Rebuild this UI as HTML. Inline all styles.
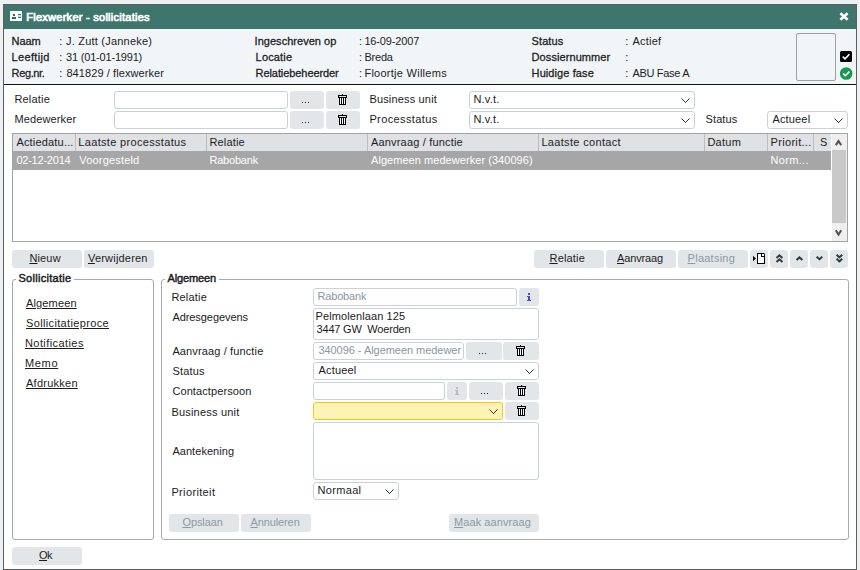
<!DOCTYPE html>
<html><head><meta charset="utf-8">
<style>
*{box-sizing:border-box;margin:0;padding:0}
html,body{width:860px;height:570px;overflow:hidden;background:#eef1f3;font-family:"Liberation Sans",sans-serif;font-size:11px;color:#1c1c1c}
.b{position:absolute}
.t{position:absolute;white-space:nowrap;line-height:13px}
.inp{border:1px solid #c9d1da;border-radius:3px;background:#fff}
.btn{position:absolute;background:#e2e6e9;border-radius:3px}
.fs{border:1px solid #a9a9a9;border-radius:3px}
.u{text-decoration:underline;text-underline-offset:1px}
</style></head><body>

<div class="b " style="left:3px;top:4px;width:854px;height:566px;border:1px solid #5c5c5c;background:#fff"></div>
<div class="b " style="left:4px;top:5px;width:852px;height:24px;background:#3e766e"></div>
<svg class="b" style="left:10px;top:11px" width="12" height="10" viewBox="0 0 12 10" shape-rendering="crispEdges"><rect x="0" y="0" width="12" height="10" fill="#fff"/><rect x="3" y="3" width="2" height="2" fill="#2f6a61"/><rect x="2" y="6" width="4" height="2" fill="#2f6a61"/><rect x="8" y="3" width="3" height="1" fill="#3d766d"/><rect x="8" y="4" width="3" height="2" fill="#c3d5d2"/><rect x="8" y="6" width="3" height="1" fill="#3d766d"/></svg>
<svg class="b" style="left:839px;top:12px" width="10" height="9" viewBox="0 0 10 9"><path d="M1.4 1.3L8.6 7.7M8.6 1.3L1.4 7.7" stroke="#fff" stroke-width="2.6"/></svg>
<div class="b " style="left:4px;top:29px;width:852px;height:55px;background:#f1f5f8"></div>
<div class="b " style="left:4px;top:84px;width:852px;height:1px;background:#111"></div>
<div class="b " style="left:796px;top:33px;width:40px;height:48px;border:1px solid #a0a0a0;border-radius:2px;background:#f1f5f8"></div>
<svg class="b" style="left:840px;top:51px" width="13" height="12" viewBox="0 0 13 12"><rect x="0" y="0" width="12" height="11" rx="1.5" fill="#000"/><path d="M2.8 5.6L5 7.8L9.4 3.2" fill="none" stroke="#fff" stroke-width="1.6"/></svg>
<svg class="b" style="left:840px;top:67px" width="13" height="13" viewBox="0 0 13 13"><circle cx="6.2" cy="6.5" r="6.3" fill="#159a4f"/><path d="M3.2 6.6L5.4 8.7L9.4 4.6" fill="none" stroke="#fff" stroke-width="1.6"/></svg>
<div class="b inp" style="left:114px;top:91px;width:174px;height:18px;"></div>
<div class="btn" style="left:290px;top:91px;width:34px;height:18px"><div class="b" style="left:12px;top:11px;width:1px;height:1px;background:#1a1a2a"></div><div class="b" style="left:15px;top:11px;width:1px;height:1px;background:#1a1a2a"></div><div class="b" style="left:18px;top:11px;width:1px;height:1px;background:#1a1a2a"></div></div>
<div class="btn" style="left:326px;top:91px;width:34px;height:18px"><div style="position:absolute;left:11px;top:2px;line-height:0"><svg width="11" height="13" viewBox="0 0 11 13" shape-rendering="crispEdges"><rect x="4.6" y="1" width="1.8" height="1" fill="#000"/><rect x="1.5" y="2.5" width="8" height="2" fill="none" stroke="#000" stroke-width="1"/><rect x="2" y="5" width="7" height="7" fill="#000"/><rect x="3" y="5" width="1" height="6" fill="#fff"/><rect x="5" y="5" width="1" height="6" fill="#fff"/><rect x="7" y="5" width="1" height="6" fill="#fff"/></svg></div></div>
<div class="b inp" style="left:469px;top:91px;width:226px;height:18px;"></div>
<svg class="b" style="left:681px;top:98px" width="9" height="5" fill="#3a3a3a" shape-rendering="crispEdges"><rect x="0" y="0" width="1" height="1" opacity="0.5"/><rect x="1" y="1" width="1" height="1"/><rect x="2" y="2" width="1" height="1"/><rect x="3" y="3" width="1" height="1"/><rect x="4" y="4" width="1" height="1"/><rect x="5" y="3" width="1" height="1"/><rect x="6" y="2" width="1" height="1"/><rect x="7" y="1" width="1" height="1"/><rect x="8" y="0" width="1" height="1" opacity="0.5"/></svg>
<div class="b inp" style="left:114px;top:111px;width:174px;height:18px;"></div>
<div class="btn" style="left:290px;top:111px;width:34px;height:18px"><div class="b" style="left:12px;top:11px;width:1px;height:1px;background:#1a1a2a"></div><div class="b" style="left:15px;top:11px;width:1px;height:1px;background:#1a1a2a"></div><div class="b" style="left:18px;top:11px;width:1px;height:1px;background:#1a1a2a"></div></div>
<div class="btn" style="left:326px;top:111px;width:34px;height:18px"><div style="position:absolute;left:11px;top:2px;line-height:0"><svg width="11" height="13" viewBox="0 0 11 13" shape-rendering="crispEdges"><rect x="4.6" y="1" width="1.8" height="1" fill="#000"/><rect x="1.5" y="2.5" width="8" height="2" fill="none" stroke="#000" stroke-width="1"/><rect x="2" y="5" width="7" height="7" fill="#000"/><rect x="3" y="5" width="1" height="6" fill="#fff"/><rect x="5" y="5" width="1" height="6" fill="#fff"/><rect x="7" y="5" width="1" height="6" fill="#fff"/></svg></div></div>
<div class="b inp" style="left:469px;top:111px;width:226px;height:18px;"></div>
<svg class="b" style="left:681px;top:118px" width="9" height="5" fill="#3a3a3a" shape-rendering="crispEdges"><rect x="0" y="0" width="1" height="1" opacity="0.5"/><rect x="1" y="1" width="1" height="1"/><rect x="2" y="2" width="1" height="1"/><rect x="3" y="3" width="1" height="1"/><rect x="4" y="4" width="1" height="1"/><rect x="5" y="3" width="1" height="1"/><rect x="6" y="2" width="1" height="1"/><rect x="7" y="1" width="1" height="1"/><rect x="8" y="0" width="1" height="1" opacity="0.5"/></svg>
<div class="b inp" style="left:767px;top:111px;width:81px;height:18px;"></div>
<svg class="b" style="left:834px;top:118px" width="9" height="5" fill="#3a3a3a" shape-rendering="crispEdges"><rect x="0" y="0" width="1" height="1" opacity="0.5"/><rect x="1" y="1" width="1" height="1"/><rect x="2" y="2" width="1" height="1"/><rect x="3" y="3" width="1" height="1"/><rect x="4" y="4" width="1" height="1"/><rect x="5" y="3" width="1" height="1"/><rect x="6" y="2" width="1" height="1"/><rect x="7" y="1" width="1" height="1"/><rect x="8" y="0" width="1" height="1" opacity="0.5"/></svg>
<div class="b " style="left:12px;top:133px;width:836px;height:109px;border:1px solid #a3a3a3;background:#fff"></div>
<div class="b " style="left:13px;top:134px;width:818px;height:17px;background:#dfe1e4"></div>
<div class="b " style="left:75px;top:134px;width:1px;height:17px;background:#bcbcbc"></div>
<div class="b " style="left:206px;top:134px;width:1px;height:17px;background:#bcbcbc"></div>
<div class="b " style="left:367px;top:134px;width:1px;height:17px;background:#bcbcbc"></div>
<div class="b " style="left:538px;top:134px;width:1px;height:17px;background:#bcbcbc"></div>
<div class="b " style="left:704px;top:134px;width:1px;height:17px;background:#bcbcbc"></div>
<div class="b " style="left:767px;top:134px;width:1px;height:17px;background:#bcbcbc"></div>
<div class="b " style="left:813px;top:134px;width:1px;height:17px;background:#bcbcbc"></div>
<div class="b " style="left:13px;top:151px;width:818px;height:19px;background:#a6a6a6"></div>
<div class="b " style="left:832px;top:134px;width:15px;height:107px;background:#efefef"></div>
<div class="b " style="left:832px;top:150px;width:14px;height:73px;background:#c9c9c9"></div>
<svg class="b" style="left:834px;top:139px" width="10" height="8"><polyline points="1.8,6.1 4.5,2.1 7.2,6.1" fill="none" stroke="#505050" stroke-width="2"/></svg>
<svg class="b" style="left:834px;top:229px" width="10" height="8"><polyline points="1.8,1.3 4.5,5.6 7.2,1.3" fill="none" stroke="#505050" stroke-width="2"/></svg>
<div class="btn" style="left:12px;top:250px;width:70px;height:18px"></div>
<div class="btn" style="left:84px;top:250px;width:70px;height:18px"></div>
<div class="btn" style="left:534px;top:250px;width:70px;height:18px"></div>
<div class="btn" style="left:606px;top:250px;width:70px;height:18px"></div>
<div class="btn" style="left:678px;top:250px;width:70px;height:18px"></div>
<div class="btn" style="left:750px;top:250px;width:18px;height:18px"></div>
<div class="btn" style="left:770px;top:250px;width:18px;height:18px"></div>
<div class="btn" style="left:790px;top:250px;width:18px;height:18px"></div>
<div class="btn" style="left:810px;top:250px;width:18px;height:18px"></div>
<div class="btn" style="left:830px;top:250px;width:18px;height:18px"></div>
<svg class="b" style="left:752px;top:252px" width="15" height="13" viewBox="0 0 15 13"><path d="M1 3.8L3.9 6.5L1 9.2z" fill="#000"/><g shape-rendering="crispEdges" fill="#000"><rect x="6" y="2" width="6" height="9" fill="#fff"/><rect x="5" y="1" width="1" height="11"/><rect x="5" y="11" width="8" height="1"/><rect x="12" y="3" width="1" height="9"/><rect x="5" y="1" width="7" height="1"/><rect x="12" y="1" width="1" height="1" fill="#888"/><rect x="12" y="2" width="1" height="1" fill="#333"/><rect x="9" y="2" width="1" height="3"/><rect x="9" y="4" width="3" height="1"/></g></svg>
<svg class="b" style="left:775px;top:253px" width="9" height="11"><polyline points="1.5,5 4.45,2.3 7.4,5" fill="none" stroke="#2e3a42" stroke-width="2"/><polyline points="1.5,9 4.45,6.3 7.4,9" fill="none" stroke="#2e3a42" stroke-width="2"/></svg>
<svg class="b" style="left:795px;top:255px" width="9" height="7"><polyline points="1.5,5 4.45,2.4 7.4,5" fill="none" stroke="#2e3a42" stroke-width="2"/></svg>
<svg class="b" style="left:815px;top:255px" width="9" height="7"><polyline points="1.6,1.7 4.45,4.2 7.3,1.7" fill="none" stroke="#2e3a42" stroke-width="2"/></svg>
<svg class="b" style="left:835px;top:253px" width="9" height="11"><polyline points="1.6,1.7 4.4,4.4 7.2,1.7" fill="none" stroke="#2e3a42" stroke-width="2"/><polyline points="1.6,5.7 4.4,8.4 7.2,5.7" fill="none" stroke="#2e3a42" stroke-width="2"/></svg>
<div class="b fs" style="left:12px;top:279px;width:142px;height:261px;"></div>
<div class="b " style="left:16px;top:275px;width:58px;height:10px;background:#fff"></div>
<div class="b fs" style="left:161px;top:279px;width:688px;height:261px;"></div>
<div class="b " style="left:165px;top:275px;width:54px;height:10px;background:#fff"></div>
<div class="b inp" style="left:313px;top:288px;width:204px;height:18px;"></div>
<div class="btn" style="left:519px;top:288px;width:20px;height:18px"><svg class="b" style="left:8px;top:5px" width="4" height="8" fill="#4d4db9" shape-rendering="crispEdges"><rect x="1" y="0" width="2" height="2"/><rect x="0" y="3" width="3" height="1"/><rect x="1" y="4" width="2" height="3"/><rect x="0" y="7" width="4" height="1"/></svg></div>
<div class="b inp" style="left:313px;top:308px;width:226px;height:32px;"></div>
<div class="b inp" style="left:313px;top:342px;width:151px;height:18px;"></div>
<div class="btn" style="left:466px;top:342px;width:36px;height:18px"><div class="b" style="left:13px;top:11px;width:1px;height:1px;background:#1a1a2a"></div><div class="b" style="left:16px;top:11px;width:1px;height:1px;background:#1a1a2a"></div><div class="b" style="left:19px;top:11px;width:1px;height:1px;background:#1a1a2a"></div></div>
<div class="btn" style="left:503px;top:342px;width:36px;height:18px"><div style="position:absolute;left:12px;top:2px;line-height:0"><svg width="11" height="13" viewBox="0 0 11 13" shape-rendering="crispEdges"><rect x="4.6" y="1" width="1.8" height="1" fill="#000"/><rect x="1.5" y="2.5" width="8" height="2" fill="none" stroke="#000" stroke-width="1"/><rect x="2" y="5" width="7" height="7" fill="#000"/><rect x="3" y="5" width="1" height="6" fill="#fff"/><rect x="5" y="5" width="1" height="6" fill="#fff"/><rect x="7" y="5" width="1" height="6" fill="#fff"/></svg></div></div>
<div class="b inp" style="left:313px;top:362px;width:226px;height:18px;"></div>
<svg class="b" style="left:525px;top:369px" width="9" height="5" fill="#3a3a3a" shape-rendering="crispEdges"><rect x="0" y="0" width="1" height="1" opacity="0.5"/><rect x="1" y="1" width="1" height="1"/><rect x="2" y="2" width="1" height="1"/><rect x="3" y="3" width="1" height="1"/><rect x="4" y="4" width="1" height="1"/><rect x="5" y="3" width="1" height="1"/><rect x="6" y="2" width="1" height="1"/><rect x="7" y="1" width="1" height="1"/><rect x="8" y="0" width="1" height="1" opacity="0.5"/></svg>
<div class="b inp" style="left:313px;top:382px;width:132px;height:18px;"></div>
<div class="btn" style="left:447px;top:382px;width:20px;height:18px"><svg class="b" style="left:8px;top:5px" width="4" height="8" fill="#b8b8b8" shape-rendering="crispEdges"><rect x="1" y="0" width="2" height="2"/><rect x="0" y="3" width="3" height="1"/><rect x="1" y="4" width="2" height="3"/><rect x="0" y="7" width="4" height="1"/></svg></div>
<div class="btn" style="left:469px;top:382px;width:34px;height:18px"><div class="b" style="left:12px;top:11px;width:1px;height:1px;background:#1a1a2a"></div><div class="b" style="left:15px;top:11px;width:1px;height:1px;background:#1a1a2a"></div><div class="b" style="left:18px;top:11px;width:1px;height:1px;background:#1a1a2a"></div></div>
<div class="btn" style="left:505px;top:382px;width:34px;height:18px"><div style="position:absolute;left:11px;top:2px;line-height:0"><svg width="11" height="13" viewBox="0 0 11 13" shape-rendering="crispEdges"><rect x="4.6" y="1" width="1.8" height="1" fill="#000"/><rect x="1.5" y="2.5" width="8" height="2" fill="none" stroke="#000" stroke-width="1"/><rect x="2" y="5" width="7" height="7" fill="#000"/><rect x="3" y="5" width="1" height="6" fill="#fff"/><rect x="5" y="5" width="1" height="6" fill="#fff"/><rect x="7" y="5" width="1" height="6" fill="#fff"/></svg></div></div>
<div class="b " style="left:313px;top:402px;width:190px;height:18px;border:1px solid #fcc41c;border-radius:3px;background:#fff4b5"></div>
<svg class="b" style="left:489px;top:409px" width="9" height="5" fill="#3a3a3a" shape-rendering="crispEdges"><rect x="0" y="0" width="1" height="1" opacity="0.5"/><rect x="1" y="1" width="1" height="1"/><rect x="2" y="2" width="1" height="1"/><rect x="3" y="3" width="1" height="1"/><rect x="4" y="4" width="1" height="1"/><rect x="5" y="3" width="1" height="1"/><rect x="6" y="2" width="1" height="1"/><rect x="7" y="1" width="1" height="1"/><rect x="8" y="0" width="1" height="1" opacity="0.5"/></svg>
<div class="btn" style="left:505px;top:402px;width:34px;height:18px"><div style="position:absolute;left:11px;top:2px;line-height:0"><svg width="11" height="13" viewBox="0 0 11 13" shape-rendering="crispEdges"><rect x="4.6" y="1" width="1.8" height="1" fill="#000"/><rect x="1.5" y="2.5" width="8" height="2" fill="none" stroke="#000" stroke-width="1"/><rect x="2" y="5" width="7" height="7" fill="#000"/><rect x="3" y="5" width="1" height="6" fill="#fff"/><rect x="5" y="5" width="1" height="6" fill="#fff"/><rect x="7" y="5" width="1" height="6" fill="#fff"/></svg></div></div>
<div class="b inp" style="left:313px;top:422px;width:226px;height:58px;"></div>
<div class="b inp" style="left:313px;top:482px;width:86px;height:18px;"></div>
<svg class="b" style="left:385px;top:489px" width="9" height="5" fill="#3a3a3a" shape-rendering="crispEdges"><rect x="0" y="0" width="1" height="1" opacity="0.5"/><rect x="1" y="1" width="1" height="1"/><rect x="2" y="2" width="1" height="1"/><rect x="3" y="3" width="1" height="1"/><rect x="4" y="4" width="1" height="1"/><rect x="5" y="3" width="1" height="1"/><rect x="6" y="2" width="1" height="1"/><rect x="7" y="1" width="1" height="1"/><rect x="8" y="0" width="1" height="1" opacity="0.5"/></svg>
<div class="btn" style="left:169px;top:514px;width:70px;height:18px"></div>
<div class="btn" style="left:241px;top:514px;width:70px;height:18px"></div>
<div class="btn" style="left:449px;top:514px;width:90px;height:18px"></div>
<div class="btn" style="left:12px;top:547px;width:70px;height:18px"></div>
<div class="t " style="left:26.3px;top:11px;letter-spacing:0.26px;color:#fff;-webkit-text-stroke:0.7px #fff">Flexwerker - sollicitaties</div>
<div class="t " style="left:11.6px;top:35px;letter-spacing:-0.067px;-webkit-text-stroke:0.28px #1c1c1c">Naam</div>
<div class="t " style="left:11.6px;top:51px;letter-spacing:0.343px;-webkit-text-stroke:0.28px #1c1c1c">Leeftijd</div>
<div class="t " style="left:11.6px;top:67px;letter-spacing:-0.367px;-webkit-text-stroke:0.28px #1c1c1c">Reg.nr.</div>
<div class="t " style="left:66px;top:35px;letter-spacing:0.213px;">J. Zutt (Janneke)</div>
<div class="t " style="left:66px;top:51px;letter-spacing:-0.186px;">31 (01-01-1991)</div>
<div class="t " style="left:66.4px;top:67px;letter-spacing:0.089px;">841829 / flexwerker</div>
<div class="t " style="left:59.2px;top:35px;letter-spacing:0px;">:</div>
<div class="t " style="left:59.2px;top:51px;letter-spacing:0px;">:</div>
<div class="t " style="left:59.2px;top:67px;letter-spacing:0px;">:</div>
<div class="t " style="left:254.6px;top:35px;letter-spacing:0.029px;-webkit-text-stroke:0.28px #1c1c1c">Ingeschreven op</div>
<div class="t " style="left:255.6px;top:51px;letter-spacing:0.167px;-webkit-text-stroke:0.28px #1c1c1c">Locatie</div>
<div class="t " style="left:255.6px;top:67px;letter-spacing:-0.08px;-webkit-text-stroke:0.28px #1c1c1c">Relatiebeheerder</div>
<div class="t " style="left:364.4px;top:35px;letter-spacing:-0.156px;">16-09-2007</div>
<div class="t " style="left:364.4px;top:51px;letter-spacing:-0.2px;">Breda</div>
<div class="t " style="left:364.4px;top:67px;letter-spacing:0.267px;">Floortje Willems</div>
<div class="t " style="left:359px;top:35px;letter-spacing:0px;">:</div>
<div class="t " style="left:359px;top:51px;letter-spacing:0px;">:</div>
<div class="t " style="left:359px;top:67px;letter-spacing:0px;">:</div>
<div class="t " style="left:531.6px;top:35px;letter-spacing:0.08px;-webkit-text-stroke:0.28px #1c1c1c">Status</div>
<div class="t " style="left:531.6px;top:51px;letter-spacing:0.083px;-webkit-text-stroke:0.28px #1c1c1c">Dossiernummer</div>
<div class="t " style="left:531.6px;top:67px;letter-spacing:0.091px;-webkit-text-stroke:0.28px #1c1c1c">Huidige fase</div>
<div class="t " style="left:632.4px;top:35px;letter-spacing:0.24px;">Actief</div>
<div class="t " style="left:632.4px;top:67px;letter-spacing:-0.311px;">ABU Fase A</div>
<div class="t " style="left:625.2px;top:35px;letter-spacing:0px;">:</div>
<div class="t " style="left:625.2px;top:51px;letter-spacing:0px;">:</div>
<div class="t " style="left:625.2px;top:67px;letter-spacing:0px;">:</div>
<div class="t " style="left:14.4px;top:93px;letter-spacing:0.2px;">Relatie</div>
<div class="t " style="left:14.4px;top:113px;letter-spacing:0.133px;">Medewerker</div>
<div class="t " style="left:369.4px;top:93px;letter-spacing:0.167px;">Business unit</div>
<div class="t " style="left:369.4px;top:113px;letter-spacing:0.382px;">Processtatus</div>
<div class="t " style="left:473.4px;top:93px;letter-spacing:0.2px;">N.v.t.</div>
<div class="t " style="left:473.4px;top:113px;letter-spacing:0.2px;">N.v.t.</div>
<div class="t " style="left:705.6px;top:113px;letter-spacing:0.08px;">Status</div>
<div class="t " style="left:772.4px;top:113px;letter-spacing:0.167px;">Actueel</div>
<div class="t " style="left:16.4px;top:136px;letter-spacing:0.182px;">Actiedatu...</div>
<div class="t " style="left:78.3px;top:136px;letter-spacing:0.326px;">Laatste processtatus</div>
<div class="t " style="left:209.4px;top:136px;letter-spacing:0.167px;">Relatie</div>
<div class="t " style="left:371px;top:136px;letter-spacing:0.176px;">Aanvraag / functie</div>
<div class="t " style="left:541.4px;top:136px;letter-spacing:0.329px;">Laatste contact</div>
<div class="t " style="left:707.4px;top:136px;letter-spacing:0.25px;">Datum</div>
<div class="t " style="left:770.6px;top:136px;letter-spacing:0.311px;">Priorit...</div>
<div class="t " style="left:820px;top:136px;letter-spacing:0px;">S</div>
<div class="t " style="left:16.4px;top:154px;letter-spacing:-0.222px;color:#fff">02-12-2014</div>
<div class="t " style="left:79.3px;top:154px;letter-spacing:0.18px;color:#fff">Voorgesteld</div>
<div class="t " style="left:209.4px;top:154px;letter-spacing:-0.2px;color:#fff">Rabobank</div>
<div class="t " style="left:371px;top:154px;letter-spacing:0.052px;color:#fff">Algemeen medewerker (340096)</div>
<div class="t " style="left:770.6px;top:154px;letter-spacing:0.3px;color:#fff">Norm...</div>
<div class="t " style="left:29.4px;top:252px;letter-spacing:0.15px;"><span class="u">N</span>ieuw</div>
<div class="t " style="left:88px;top:252px;letter-spacing:0.2px;"><span class="u">V</span>erwijderen</div>
<div class="t " style="left:549.5px;top:252px;letter-spacing:0.167px;"><span class="u">R</span>elatie</div>
<div class="t " style="left:617px;top:252px;letter-spacing:-0.143px;"><span class="u">A</span>anvraag</div>
<div class="t " style="left:687.6px;top:252px;letter-spacing:0.25px;color:#8e98a3"><span class="u">P</span>laatsing</div>
<div class="t " style="left:18.4px;top:272px;letter-spacing:0.291px;-webkit-text-stroke:0.45px #1c1c1c">Sollicitatie</div>
<div class="t " style="left:167.6px;top:272px;letter-spacing:-0.143px;-webkit-text-stroke:0.45px #1c1c1c">Algemeen</div>
<div class="t u" style="left:26px;top:297px;letter-spacing:0.143px;">Algemeen</div>
<div class="t u" style="left:26px;top:317px;letter-spacing:0.35px;">Sollicitatieproce</div>
<div class="t u" style="left:25px;top:337px;letter-spacing:0.418px;">Notificaties</div>
<div class="t u" style="left:25px;top:357px;letter-spacing:0.667px;">Memo</div>
<div class="t u" style="left:26px;top:377px;letter-spacing:0.25px;">Afdrukken</div>
<div class="t " style="left:171.4px;top:291px;letter-spacing:0.2px;">Relatie</div>
<div class="t " style="left:172.4px;top:311px;letter-spacing:-0.067px;">Adresgegevens</div>
<div class="t " style="left:172.4px;top:345px;letter-spacing:0.129px;">Aanvraag / functie</div>
<div class="t " style="left:172.4px;top:365px;letter-spacing:0.2px;">Status</div>
<div class="t " style="left:172.4px;top:385px;letter-spacing:0.1px;">Contactpersoon</div>
<div class="t " style="left:171.4px;top:406px;letter-spacing:0.2px;">Business unit</div>
<div class="t " style="left:172.4px;top:445px;letter-spacing:0.05px;">Aantekening</div>
<div class="t " style="left:171.4px;top:486px;letter-spacing:0.356px;">Prioriteit</div>
<div class="t " style="left:317.4px;top:290px;letter-spacing:-0.143px;color:#8c96a3">Rabobank</div>
<div class="t " style="left:315.6px;top:310px;letter-spacing:0.093px;">Pelmolenlaan 125</div>
<div class="t " style="left:316.6px;top:323px;letter-spacing:-0.2px;">3447 GW&nbsp; Woerden</div>
<div class="t " style="left:318.4px;top:344px;letter-spacing:-0.042px;color:#8c96a3">340096 - Algemeen medewer</div>
<div class="t " style="left:318.4px;top:364px;letter-spacing:0.2px;">Actueel</div>
<div class="t " style="left:317.5px;top:484px;letter-spacing:0.333px;">Normaal</div>
<div class="t " style="left:182.4px;top:516px;letter-spacing:-0.067px;color:#8e98a3"><span class="u">O</span>pslaan</div>
<div class="t " style="left:250.4px;top:516px;letter-spacing:-0.1px;color:#8e98a3"><span class="u">A</span>nnuleren</div>
<div class="t " style="left:454px;top:516px;letter-spacing:0.083px;color:#8e98a3"><span class="u">M</span>aak aanvraag</div>
<div class="t " style="left:39px;top:549px;letter-spacing:-0.5px;"><span class="u">O</span>k</div>
</body></html>
